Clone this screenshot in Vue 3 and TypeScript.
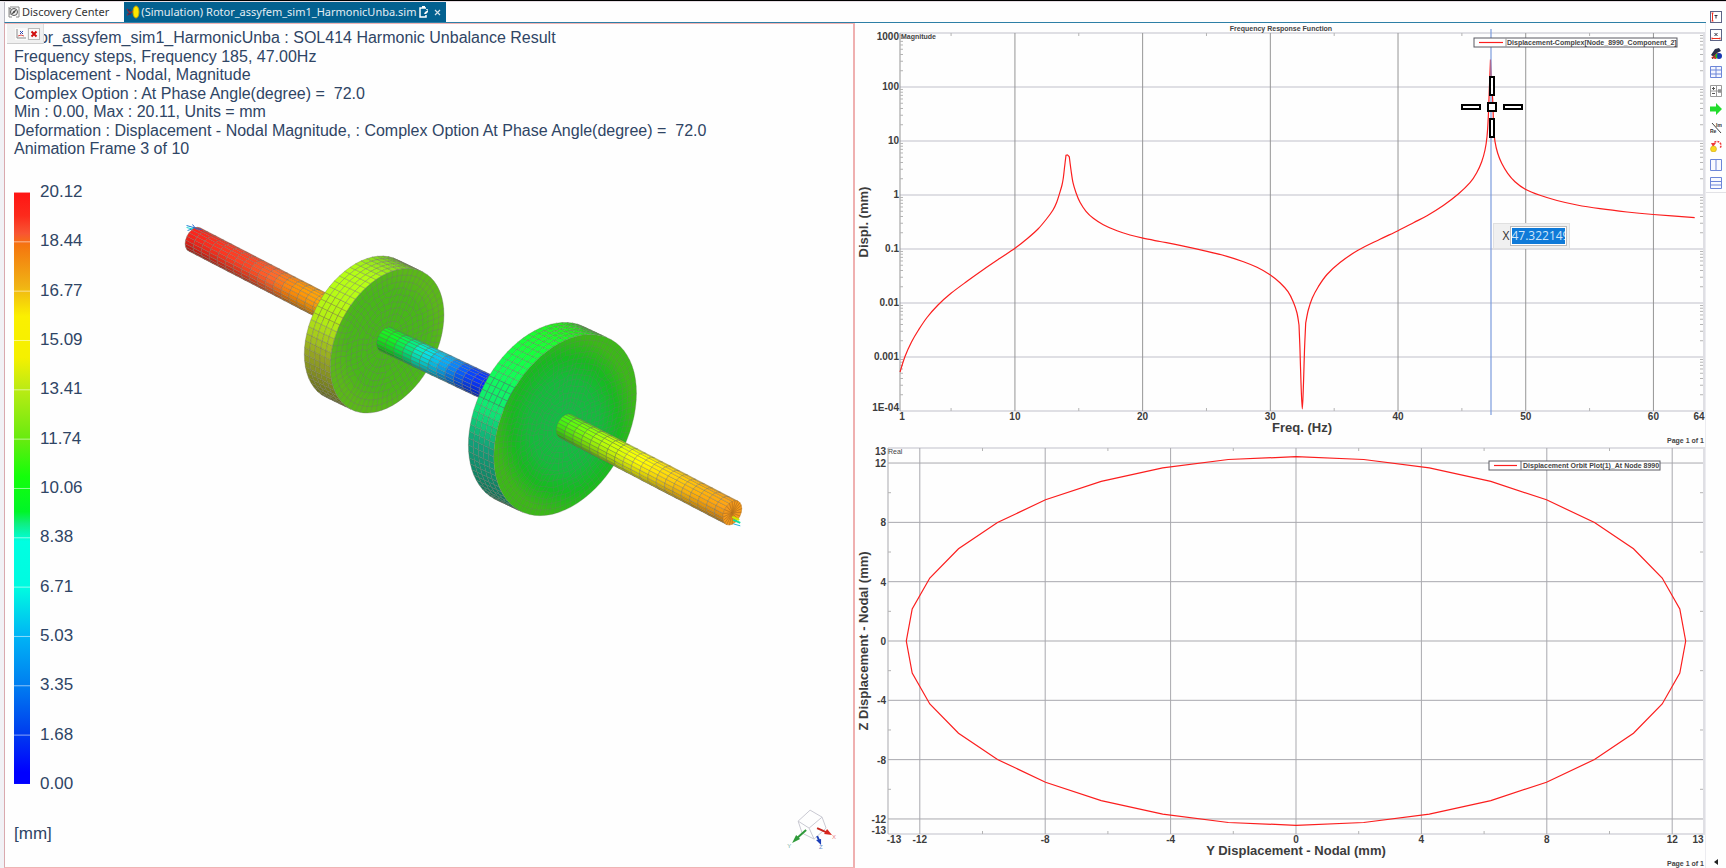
<script setup lang="ts">
import { ref } from 'vue'

type Pt = [number, number]
type Rgb = [number, number, number]
interface Cell { d: string; fill: string }

const cursorX = ref('47.322149')

const resultInfo = [
  'Rotor_assyfem_sim1_HarmonicUnba : SOL414 Harmonic Unbalance Result',
  'Frequency steps, Frequency 185, 47.00Hz',
  'Displacement - Nodal, Magnitude',
  'Complex Option : At Phase Angle(degree) =  72.0',
  'Min : 0.00, Max : 20.11, Units = mm',
  'Deformation : Displacement - Nodal Magnitude, : Complex Option At Phase Angle(degree) =  72.0',
  'Animation Frame 3 of 10',
]
const legend = ['20.12', '18.44', '16.77', '15.09', '13.41', '11.74', '10.06', '8.38', '6.71', '5.03', '3.35', '1.68', '0.00']

/* ---------- rotor model ---------- */
const mix = (stops: [number, Rgb][], t: number): Rgb => {
  if (t <= stops[0][0]) return stops[0][1]
  for (let i = 1; i < stops.length; i++) {
    if (t <= stops[i][0]) {
      const k = (t - stops[i - 1][0]) / (stops[i][0] - stops[i - 1][0])
      return stops[i][1].map((c, j) => stops[i - 1][1][j] + (c - stops[i - 1][1][j]) * k) as Rgb
    }
  }
  return stops[stops.length - 1][1]
}
const shade = (c: Rgb, k: number) => `rgb(${c.map(v => Math.round(Math.min(255, v * k))).join(',')})`
const path = (p: Pt[]) => 'M' + p.map(q => q[0].toFixed(1) + ' ' + q[1].toFixed(1)).join('L') + 'Z'
const rim = (c: Pt, u: Pt, v: Pt, a: number, s = 1): Pt => [
  c[0] + s * (u[0] * Math.cos(a) + v[0] * Math.sin(a)),
  c[1] + s * (u[1] * Math.cos(a) + v[1] * Math.sin(a)),
]
const light = (a: number) => 0.74 + 0.32 * Math.cos(a + 1.9)

function tube(a: Pt, b: Pt, u: Pt, v: Pt, rows: number, around: number, color: (t: number, ang: number) => Rgb): Cell[] {
  const out: Cell[] = []
  const dx = b[0] - a[0]
  const dy = b[1] - a[1]
  for (let j = 0; j < around; j++) {
    const a0 = (j / around) * Math.PI * 2
    const a1 = ((j + 1) / around) * Math.PI * 2
    const p0 = rim(a, u, v, a0)
    const p1 = rim(a, u, v, a1)
    if (dx * (p1[1] - p0[1]) - dy * (p1[0] - p0[0]) >= 0) continue
    for (let i = 0; i < rows; i++) {
      const at = (p: Pt, t: number): Pt => [p[0] + dx * t, p[1] + dy * t]
      const t0 = i / rows
      const t1 = (i + 1) / rows
      const am = (a0 + a1) / 2
      out.push({ d: path([at(p0, t0), at(p1, t0), at(p1, t1), at(p0, t1)]), fill: shade(color((t0 + t1) / 2, am), light(am)) })
    }
  }
  return out
}

function faceMesh(c: Pt, u: Pt, v: Pt, rings: number, spokes: number): string {
  let seed = 7
  const rnd = () => { seed = (seed * 16807) % 2147483647; return seed / 2147483647 - 0.5 }
  let d = ''
  let prev: Pt[] = []
  for (let r = 0; r <= rings; r++) {
    const s = 1 - (r / rings) * 0.82
    const n = r < 3 ? spokes : Math.max(20, Math.round(spokes * (s + 0.1)))
    const jit = r < 3 ? 0 : 0.35
    const ring: Pt[] = []
    for (let i = 0; i < n; i++) ring.push(rim(c, u, v, ((i + rnd() * jit) / n) * Math.PI * 2, s + rnd() * jit * 0.08))
    d += path(ring)
    if (prev.length) {
      ring.forEach((p, i) => {
        const q = prev[Math.round((i / n) * prev.length) % prev.length]
        d += `M${p[0].toFixed(1)} ${p[1].toFixed(1)}L${q[0].toFixed(1)} ${q[1].toFixed(1)}`
      })
    }
    prev = ring
  }
  return d
}

const su: Pt = [9.5, -4.3]
const sv: Pt = [0, 11.4]
const u1: Pt = [57, -26]
const v1: Pt = [0, 67.6]
const u2: Pt = [71.5, -32]
const v2: Pt = [0, 85]
const c1: Pt = [387, 339.5]
const c2: Pt = [565.5, 424]

const shaftA = tube([194, 238], [362, 325], su, sv, 21, 20, t => mix([
  [0, [240, 32, 26]], [0.35, [252, 66, 36]], [0.5, [255, 100, 40]], [0.62, [255, 138, 8]], [0.85, [255, 168, 8]], [1, [250, 175, 20]],
], t))
const shaftB = tube([386, 338], [540, 411], su, sv, 18, 20, t => mix([
  [0, [30, 225, 30]], [0.1, [15, 235, 40]], [0.2, [5, 225, 130]], [0.28, [8, 225, 215]], [0.42, [10, 160, 235]], [0.56, [8, 70, 245]], [0.7, [10, 40, 250]], [1, [5, 30, 245]],
], t))
const shaftC = tube([566, 425], [733, 512], su, sv, 20, 20, t => mix([
  [0, [60, 230, 20]], [0.12, [110, 240, 10]], [0.3, [190, 245, 8]], [0.48, [248, 245, 5]], [0.65, [255, 205, 12]], [0.85, [255, 170, 12]], [1, [250, 155, 20]],
], t))
const rim1 = tube([361, 327], c1, u1, v1, 5, 64, (_, a) => mix([
  [1.2, [110, 150, 60]], [2.2, [160, 165, 45]], [3.2, [172, 190, 40]], [3.7, [180, 240, 20]], [4.5, [170, 240, 20]], [5.1, [120, 210, 30]], [5.8, [80, 180, 25]],
], a))
const rim2 = tube([540, 412], c2, u2, v2, 5, 80, (_, a) => mix([
  [1.2, [50, 150, 90]], [2.2, [20, 180, 140]], [3.2, [20, 185, 140]], [3.6, [15, 240, 120]], [4.3, [20, 245, 60]], [5, [35, 235, 25]], [5.7, [40, 170, 30]],
], a))
const mesh1 = faceMesh(c1, u1, v1, 9, 64)
const mesh2 = faceMesh(c2, u2, v2, 13, 84)
const outline = (c: Pt, u: Pt, v: Pt) => path(Array.from({ length: 72 }, (_, i) => rim(c, u, v, (i / 36) * Math.PI)))
const endCap = Array.from({ length: 20 }, (_, i) => path([[733, 512], rim([733, 512], su, sv, (i / 10) * Math.PI), rim([733, 512], su, sv, ((i + 1) / 10) * Math.PI)])).join('')

/* ---------- frequency response chart ---------- */
const fx = (hz: number) => 900 + (hz - 1) * 12.77
const fy = (decade: number) => 195 - decade * 54
const freqTicks = [10, 20, 30, 40, 50, 60]
const freqMinor = [5, 15, 25, 35, 45, 55]
const decades = [
  { v: 2, label: '100' }, { v: 1, label: '10' }, { v: 0, label: '1' },
  { v: -1, label: '0.1' }, { v: -2, label: '0.01' }, { v: -3, label: '0.001' },
]
const logMinor = [-4, -3, -2, -1, 0, 1, 2].flatMap(d => [2, 3, 4, 5, 6, 7, 8, 9].map(m => fy(d + Math.log10(m))))

/* smooth branches between the sharp resonance and anti-resonance points */
const branches: Pt[][] = [
  [
    [900, 372], [905, 356.5], [911.5, 342], [918.5, 330], [927, 317.5], [938, 305], [951, 293.3], [967, 281.3], [983.5, 269.5],
    [1000, 258.3], [1015, 248.3], [1028, 238], [1038, 229], [1046.5, 219], [1053, 210], [1056.8, 202], [1060, 192], [1062, 185], [1063.3, 178], [1064.7, 166], [1066, 155.3],
  ],
  [[1066, 155.3], [1067.5, 155], [1069.3, 156.8]],
  [
    [1069.3, 156.8], [1071, 170], [1073, 182.7], [1076, 192.7], [1080, 202.3], [1086, 211.3], [1093.3, 218.3], [1103.3, 224.7], [1117, 230.8],
    [1130, 235], [1143, 238.2], [1160, 241.5], [1180, 245.3], [1207, 251.3], [1227, 256.3], [1243.5, 261.7], [1257, 267.3], [1270, 274.7],
    [1280, 282.7], [1288, 291.7], [1293.3, 302], [1297, 313], [1299, 325],
  ],
  [[1299, 325], [1300, 350], [1301, 383], [1302.3, 409], [1303.5, 383], [1304.5, 350], [1305.7, 323]],
  [
    [1305.7, 323], [1308.3, 310], [1312.3, 298], [1318.3, 286.7], [1327, 274.5], [1340, 262.5], [1358, 250.3], [1380, 239.3], [1398, 230.7],
    [1413.5, 222.7], [1427, 215.7], [1443.3, 205.5], [1458.3, 194], [1470, 182.7], [1476.7, 172.7], [1481.7, 161.7], [1485, 150], [1487, 136.7],
    [1488.3, 117], [1489.3, 90], [1490.5, 59.5],
  ],
  [
    [1490.5, 59.5], [1491.3, 77], [1492.7, 100], [1493.7, 128], [1495, 141.7], [1497.7, 153.3], [1501.7, 163.3], [1507.7, 173.3], [1515, 181.7], [1525.3, 189.2],
    [1540, 195.3], [1557, 200.5], [1577, 205], [1600, 208.7], [1627, 212], [1653.3, 214.5], [1694.7, 217.7],
  ],
]
const frfPath = branches.map((b, n) => {
  let d = n === 0 ? `M${b[0][0]} ${b[0][1]}` : ''
  for (let i = 0; i < b.length - 1; i++) {
    const p0 = b[Math.max(0, i - 1)]
    const p1 = b[i]
    const p2 = b[i + 1]
    const p3 = b[Math.min(b.length - 1, i + 2)]
    const h = [p1[0] + (p2[0] - p0[0]) / 6, p1[1] + (p2[1] - p0[1]) / 6, p2[0] - (p3[0] - p1[0]) / 6, p2[1] - (p3[1] - p1[1]) / 6]
    d += `C${h.map(v => v.toFixed(2)).join(' ')} ${p2[0]} ${p2[1]}`
  }
  return d
}).join('')

/* ---------- orbit chart ---------- */
const ox = (v: number) => 1297 + v * 31.35
const oy = (v: number) => 641 - v * 14.83
const orbitTicks = [-12, -8, -4, 0, 4, 8, 12]
const orbitMinor = [-10, -6, -2, 2, 6, 10]
const orbitPoints = Array.from({ length: 37 }, (_, i) => {
  const a = (i * Math.PI) / 18
  return ox(12.43 * Math.cos(a)).toFixed(1) + ',' + oy(12.43 * Math.sin(a)).toFixed(1)
}).join(' ')

const tools = ['y-axis', 'x-axis', 'style', 'grid', 'calc', 'next', 'complex', 'reset', 'columns', 'rows']
</script>

<template>
  <div class="app">
    <main class="workspace">
      <nav class="tabs" aria-label="Documents">
        <div class="tab">
          <svg class="tab-icon" viewBox="0 0 12 12">
            <path d="M1 2.500h2M1 1v10h3M11 1v10H8M2 1h9M1 4h2M1 6h2M1 8h2" fill="none" stroke="#8a8a8a" />
            <circle cx="6" cy="6" r="3.500" fill="#eee" stroke="#555" />
            <path d="M8.500 3.500 6.700 6.700 3.500 8.500 5.300 5.300Z" fill="#444" />
          </svg>
          <button type="button" class="tab-name">Discovery Center</button>
        </div>
        <div class="tab active">
          <svg class="sim-icon" viewBox="0 0 14 14">
            <path d="M1 4 4 8 7 6M1 10 5 8" stroke="#8e2b3a" stroke-width="1.500" fill="none" />
            <path d="M2 5h3M2 9h3" stroke="#1c3266" />
            <ellipse cx="10" cy="7" rx="3" ry="6" fill="#ffe800" stroke="#c9a800" />
          </svg>
          <button type="button" class="tab-name">(Simulation) Rotor_assyfem_sim1_HarmonicUnba.sim</button>
          <svg class="edit-icon" viewBox="0 0 10 12">
            <path d="M7 2H1v9h6V9M8 3v1" fill="none" stroke="#fff" stroke-width="1.500" />
            <path d="M3 1h3" stroke="#fff" stroke-width="2" />
            <path d="M5 8 6 6 9 4v2L7 8Z" fill="#fff" />
          </svg>
          <button type="button" class="tab-close" aria-label="Close tab">
            <svg viewBox="0 0 7 7"><path d="M1 1l5 5M6 1l-5 5" stroke="#d5e3ec" stroke-width="1.200" /></svg>
          </button>
        </div>
      </nav>

      <div class="panes">
        <section class="model">
          <svg class="scene" viewBox="4 22 850 844" preserveAspectRatio="xMinYMin meet" aria-label="Rotor displacement">
            <defs>
              <radialGradient id="face1"><stop offset="0" stop-color="#44b818" /><stop offset=".7" stop-color="#48b818" /><stop offset="1" stop-color="#5ab818" /></radialGradient>
              <radialGradient id="face2"><stop offset="0" stop-color="#14bc48" /><stop offset=".5" stop-color="#14bc3a" /><stop offset=".75" stop-color="#16bc1e" /><stop offset="1" stop-color="#3cb818" /></radialGradient>
            </defs>
            <path d="M186 224l14 4M187 229l9-3" stroke="#1c7fd0" fill="none" />
            <path d="M186 226l8 2" stroke="#10d8d0" />
            <g class="mesh"><path v-for="(c, i) in shaftA" :key="i" :d="c.d" :fill="c.fill" /></g>
            <path d="M192 223l3 4 6 1" stroke="#2a63c8" fill="none" />
            <g class="mesh"><path v-for="(c, i) in rim1" :key="i" :d="c.d" :fill="c.fill" /></g>
            <path :d="outline(c1, u1, v1)" fill="url(#face1)" />
            <path :d="mesh1" class="wire" />
            <g class="mesh"><path v-for="(c, i) in shaftB" :key="i" :d="c.d" :fill="c.fill" /></g>
            <g class="mesh"><path v-for="(c, i) in rim2" :key="i" :d="c.d" :fill="c.fill" /></g>
            <path :d="outline(c2, u2, v2)" fill="url(#face2)" />
            <path :d="mesh2" class="wire fine" />
            <g class="mesh"><path v-for="(c, i) in shaftC" :key="i" :d="c.d" :fill="c.fill" /></g>
            <path :d="endCap" fill="#f59a1c" stroke="#b8741c" stroke-width=".5" />
            <path d="M733 516l7 3" stroke="#c8f000" stroke-width="2" />
            <path d="M734 519l7 3" stroke="#10e0a0" stroke-width="2" />
            <path d="M734 523l7 2" stroke="#20b0e0" />
            <g fill="none" stroke="#c9c9d2">
              <path d="M811 810 799 821 810 828 823 817ZM799 821 803 833 815 839 810 828M823 817 827 828 815 839" />
            </g>
            <path d="M807 830l-9 8" stroke="#2f9a3a" stroke-width="2" />
            <path d="M793 843 797 835 801 839Z" fill="#2f9a3a" />
            <path d="M818 828l9 4" stroke="#c8261e" stroke-width="2" />
            <path d="M833 835 825 834 828 829Z" fill="#d8261e" />
            <path d="M818 836l2 4" stroke="#1c3fb8" stroke-width="2" />
            <path d="M822 845 817 840 822 839Z" fill="#1c3fb8" />
            <g class="triad-text">
              <text x="788" y="848" fill="#7ab0a8">Y</text>
              <text x="833" y="839" fill="#e88080">X</text>
              <text x="820" y="849" fill="#7090c8">Z</text>
            </g>
          </svg>

          <div class="mini-bar">
            <button type="button" aria-label="Plot">
              <svg viewBox="0 0 10 10"><path d="M1 0v9h9" fill="none" stroke="#8a8a8a" /><path d="M4 2l3 3M7 2l-3 3" stroke="#2846b0" /><path d="M2 7l3-1 3 1" fill="none" stroke="#d85050" /></svg>
            </button>
            <button type="button" class="framed" aria-label="Close">
              <svg viewBox="0 0 10 10"><path d="M2.500 2.500l5 5M7.500 2.500l-5 5" stroke="#d01010" stroke-width="2" /></svg>
            </button>
          </div>

          <div class="info"><div v-for="line in resultInfo" :key="line">{{ line }}</div></div>
          <div class="legend">
            <div class="bar"></div>
            <div class="labels"><span v-for="v in legend" :key="v">{{ v }}</span></div>
          </div>
          <div class="unit">[mm]</div>
        </section>

        <section class="charts">
          <div class="chart">
            <svg viewBox="855 23 850 423" aria-label="Frequency Response Function">
              <g class="grid-soft"><path v-for="d in decades" :key="d.v" :d="`M900 ${fy(d.v)}H1704`" /><path d="M900 33H1704V411H900" /></g>
              <g class="grid-hard"><path v-for="f in freqTicks" :key="f" :d="`M${fx(f)} 33V411`" /><path d="M900 33V411" /></g>
              <g class="ticks">
                <path v-for="f in freqMinor" :key="f" :d="`M${fx(f)} 33v3M${fx(f)} 411v-3`" />
                <path v-for="y in logMinor" :key="y" :d="`M900 ${y}h3M1703 ${y}h-3`" />
              </g>
              <g class="tick-text end">
                <text x="899" y="40">1000</text>
                <text v-for="d in decades" :key="d.v" x="899" :y="fy(d.v) + 3">{{ d.label }}</text>
                <text x="899" y="411">1E-04</text>
              </g>
              <g class="tick-text mid">
                <text x="902" y="420">1</text>
                <text v-for="f in freqTicks" :key="f" :x="fx(f)" y="420">{{ f }}</text>
                <text x="1699" y="420">64</text>
              </g>
              <text class="axis-title" x="1302" y="432">Freq. (Hz)</text>
              <text class="axis-title" transform="translate(868 222) rotate(-90)">Displ. (mm)</text>
              <text class="small" x="901" y="39">Magnitude</text>
              <text class="small mid" x="1281" y="31">Frequency Response Function</text>
              <text class="small end" x="1704" y="443">Page 1 of 1</text>
              <path class="curve" :d="frfPath" />
              <path d="M1491 29V415" class="cursor-line" />
              <rect class="key" x="1474" y="38" width="203" height="9" />
              <path d="M1506 38v9" stroke="#999" />
              <path d="M1479 42.500h24" class="curve" />
              <text class="small" x="1507" y="45">Displacement-Complex[Node_8990_Component_2]</text>
              <g class="cross">
                <rect x="1462" y="105" width="18" height="4" /><rect x="1504" y="105" width="18" height="4" />
                <rect x="1490" y="77" width="4" height="18" /><rect x="1490" y="119" width="4" height="18" />
                <rect x="1488" y="103" width="8" height="8" />
              </g>
            </svg>
            <label class="x-box"><span>X</span><input v-model="cursorX" type="text" /></label>
          </div>

          <div class="chart">
            <svg viewBox="856 446 850 422" aria-label="Displacement Orbit Plot">
              <g class="grid-soft"><path d="M889 448H1705V834H889" /></g>
              <g class="grid-orbit">
                <path v-for="v in orbitTicks" :key="v" :d="`M889 ${oy(v)}H1704M${ox(v)} 448V834`" />
                <path d="M889 448V834" />
              </g>
              <g class="ticks">
                <path v-for="v in orbitMinor" :key="v" :d="`M889 ${oy(v)}h3M1704 ${oy(v)}h-3M${ox(v)} 448v3M${ox(v)} 834v-3`" />
              </g>
              <g class="tick-text end">
                <text x="887" y="455">13</text>
                <text v-for="v in orbitTicks" :key="v" x="887" :y="oy(v) + 4">{{ v }}</text>
                <text x="887" y="834">-13</text>
              </g>
              <g class="tick-text mid">
                <text x="895" y="843">-13</text>
                <text v-for="v in orbitTicks" :key="v" :x="ox(v)" y="843">{{ v }}</text>
                <text x="1699" y="843">13</text>
              </g>
              <text class="axis-title" x="1297" y="855">Y Displacement - Nodal (mm)</text>
              <text class="axis-title" transform="translate(869 641) rotate(-90)">Z Displacement - Nodal (mm)</text>
              <text class="small thin" x="889" y="454">Real</text>
              <text class="small end" x="1705" y="866">Page 1 of 1</text>
              <polyline class="curve" :points="orbitPoints" />
              <rect class="key" x="1490" y="461" width="171" height="9" />
              <path d="M1522 461v9" stroke="#667" />
              <path d="M1495 465.500h23" class="curve" />
              <text class="small" x="1524" y="468">Displacement Orbit Plot(1)_At Node 8990</text>
            </svg>
          </div>
        </section>
      </div>
    </main>

    <aside class="tools">
      <div class="tool-list">
        <button v-for="t in tools" :key="t" type="button" :aria-label="t">
          <svg viewBox="0 0 12 12">
            <template v-if="t === 'y-axis'"><rect x=".5" y=".5" width="11" height="11" fill="#fff" stroke="#5d6486" /><path d="M2.500 2v8M1.500 2h2M1.500 10h2" stroke="#f03020" /><path d="M4.500 4.500h3M6 4.500v3" stroke="#334" /></template>
            <template v-else-if="t === 'x-axis'"><rect x=".5" y=".5" width="11" height="11" fill="#fff" stroke="#5d6486" /><path d="M2 9.500h8M2 8.500v2M10 8.500v2" stroke="#f03020" /><path d="M4.500 4l3 3M7.500 4l-3 3" stroke="#334" /></template>
            <template v-else-if="t === 'style'"><path d="M1 7 5 1 9 0 11 3 7 5 4 9Z" fill="#2a3048" /><path d="M1 10 7 5 9 6 6 11Z" fill="#e02818" /><path d="M2 11 6 7" stroke="#555" /><circle cx="9" cy="8" r="3" fill="#1838b0" /><path d="M7 6a3 3 0 0 0 0 4" stroke="#20c020" stroke-width="1.500" fill="none" /></template>
            <template v-else-if="t === 'grid'"><path d="M.5.5h11v11H.5ZM.5 4h11M.5 8h11M6 .5v11" fill="#f4f6ff" stroke="#6d86d8" /></template>
            <template v-else-if="t === 'calc'"><path d="M.5.5h11v11H.5ZM6.500.5v11M.5 6h11" fill="#fff" stroke="#9a9a9a" /><path d="M2 3.500h3M3.500 2v3M2 8.500h3M8 5h3M8 7h3" stroke="#555" /></template>
            <template v-else-if="t === 'next'"><path d="M0 3.500h6V0l6 6-6 6V8.500H0Z" fill="#22dc2c" /></template>
            <template v-else-if="t === 'complex'"><path d="M2 1l9 10" stroke="#444" /><text x="6" y="5" class="glyph">Im</text><text x="0" y="11" class="glyph">Re</text></template>
            <template v-else-if="t === 'reset'"><path d="M3 5a4 4 0 1 1 7 3" fill="none" stroke="#f03838" stroke-width="1.500" stroke-dasharray="2 1" /><path d="M1 3h5L3 7Z" fill="#f03838" /><circle cx="3.500" cy="9" r="3" fill="#f8d820" stroke="#c89a10" stroke-width=".5" /></template>
            <template v-else-if="t === 'columns'"><path d="M.5.5h11v11H.5ZM6 .5v11" fill="#f8faff" stroke="#6d86d8" /></template>
            <template v-else><path d="M.5.5h11v11H.5ZM.5 4.500h11M.5 8h11" fill="#f8faff" stroke="#6d86d8" /></template>
          </svg>
        </button>
      </div>
      <button type="button" class="collapse" aria-label="Collapse"><svg viewBox="0 0 4 6"><path d="M4 0v6L0 3Z" fill="#222" /></svg></button>
    </aside>
  </div>
</template>

<style>
body { margin: 0; background: #fefefe; }
</style>

<style scoped>
.app { box-sizing: border-box; min-height: 100vh; display: flex; border-top: 1px solid #000; background: #fefefe; font-family: "Liberation Sans", Arial, sans-serif; }
button { border: 0; padding: 0; margin: 0; background: none; font: inherit; color: inherit; cursor: pointer; }
svg { display: block; }
.workspace { flex: 1; min-width: 0; display: flex; flex-direction: column; border-left: 4px solid #f1f1f5; border-top: 1px solid #e6dde4; }
.tabs { display: flex; height: 20px; border-bottom: 1px solid #2d7fa6; border-left: 1px solid #b9b9c2; font-family: "Noto Sans", "Open Sans", sans-serif; font-size: 11px; color: #333; }
.tab { display: flex; align-items: center; padding: 0 15px 0 3px; }
.tab-icon { width: 12px; height: 12px; margin-right: 2px; }
.tab-name { white-space: nowrap; line-height: 18px; }
.tab.active { background: #036190; color: #e4eef4; padding: 0 5px 0 2px; }
.sim-icon { width: 14px; height: 14px; margin-right: 1px; }
.edit-icon { width: 10px; height: 12px; margin: 0 5px 0 3px; }
.tab-close svg { width: 7px; height: 7px; }
.panes { flex: 1; display: grid; grid-template-columns: 1fr 1fr; }
.model { position: relative; border: 1px solid #efb4b4; border-left-color: #d9a9ae; border-right: 2px solid #efb0b0; color: #2f4565; padding-left: 9px; }
.scene { position: absolute; inset: 0; width: 100%; height: 100%; }
.mesh path { stroke: #6b6b5c; stroke-width: .5; stroke-opacity: .7; }
.wire { fill: none; stroke: #737373; stroke-width: .5; stroke-opacity: .75; }
.wire.fine { stroke-opacity: .55; }
.triad-text { font-size: 6px; }
.mini-bar { position: absolute; z-index: 2; left: 2px; top: 0; display: flex; align-items: center; gap: 1px; height: 19px; padding-left: 8px; padding-right: 3px; background: #f0f0f0; border-bottom: 1px solid #ccc; border-right: 1px solid #ddd; }
.mini-bar button { width: 12px; height: 12px; display: grid; place-items: center; background: #fafafa; }
.mini-bar svg { width: 10px; height: 10px; }
.mini-bar .framed { border: 1px solid #bbb; }
.info { position: relative; margin-top: 5px; height: 129px; display: flex; flex-direction: column; justify-content: space-between; font-size: 16px; line-height: 18px; white-space: pre; }
.legend { position: relative; display: flex; gap: 10px; margin-top: 25px; height: 610px; font-size: 17px; line-height: 18px; }
.bar {
  width: 16px; margin: 9px 0;
  background:
    linear-gradient(rgba(255, 255, 255, .55) 1px, transparent 1px) 0 0 / 100% calc(100% / 12),
    linear-gradient(#ff1414 0%, #fc2a1c 4%, #f85532 7%, #f5760f 9%, #f0b414 16%, #fbf000 21%, #f5f000 28%, #beeb14 33%, #64eb0f 42%, #14ff0a 48%, #00f528 54%, #0fee80 56%, #00ffe1 59%, #00fae1 67%, #00b4f5 75%, #0080f0 83%, #0040ee 91%, #0000ff 98%);
}
.labels { display: flex; flex-direction: column; justify-content: space-between; }
.unit { position: relative; margin-top: 32px; font-size: 17px; line-height: 18px; }
.charts { min-width: 0; border-right: 1px solid #ececf0; }
.chart { position: relative; }
.chart svg { width: 100%; height: auto; }
.grid-soft path { fill: none; stroke: #dfdfe4; stroke-width: 2; }
.grid-hard path { stroke: #969696; stroke-width: 1; }
.grid-orbit path { stroke: #a9a9ae; stroke-width: 1; }
.ticks path { stroke: #b4b4b4; stroke-width: 1; }
.tick-text { font-size: 10px; font-weight: bold; fill: #3c3c3c; }
.end { text-anchor: end; }
.mid { text-anchor: middle; }
.axis-title { font-size: 13px; font-weight: bold; fill: #3c3c3c; text-anchor: middle; }
.small { font-size: 7px; font-weight: bold; fill: #444; }
.small.thin { font-weight: normal; }
.curve { fill: none; stroke: #fb1e1e; stroke-width: 1.2; }
.cursor-line { stroke: #7b9bdc; stroke-width: 1.2; }
.key { fill: #fff; stroke: #5a5a62; stroke-width: 1; }
.cross rect { fill: #fff; stroke: #000; stroke-width: 2; }
.x-box { position: absolute; left: 75%; top: 47%; box-sizing: border-box; width: 77px; height: 26px; display: flex; align-items: center; gap: 1px; margin-top: 1px; padding-left: 9px; background: #f0f0f0; border: 1px solid #e0e0e0; font: 12px "Open Sans", "Noto Sans", sans-serif; color: #333; }
.x-box input { box-sizing: border-box; width: 57px; height: 20px; padding: 0; border: 1px solid #bbb; outline: 1px solid #fff; outline-offset: -2px; background: #0f7ad8; color: #cfe6fa; font: inherit; }
.tools { width: 20px; display: flex; flex-direction: column; justify-content: space-between; align-items: center; padding: 6px 0 3px; border-top: 1px solid #e6dde4; }
.tool-list { display: flex; flex-direction: column; justify-content: space-between; align-items: center; width: 100%; height: 184px; border-bottom: 1px solid #e2e2e6; }
.tool-list button { height: 18px; display: grid; place-items: center; }
.tool-list svg { width: 12px; height: 12px; }
.glyph { font-size: 5px; font-weight: bold; fill: #333; }
.collapse svg { width: 4px; height: 6px; }
</style>
